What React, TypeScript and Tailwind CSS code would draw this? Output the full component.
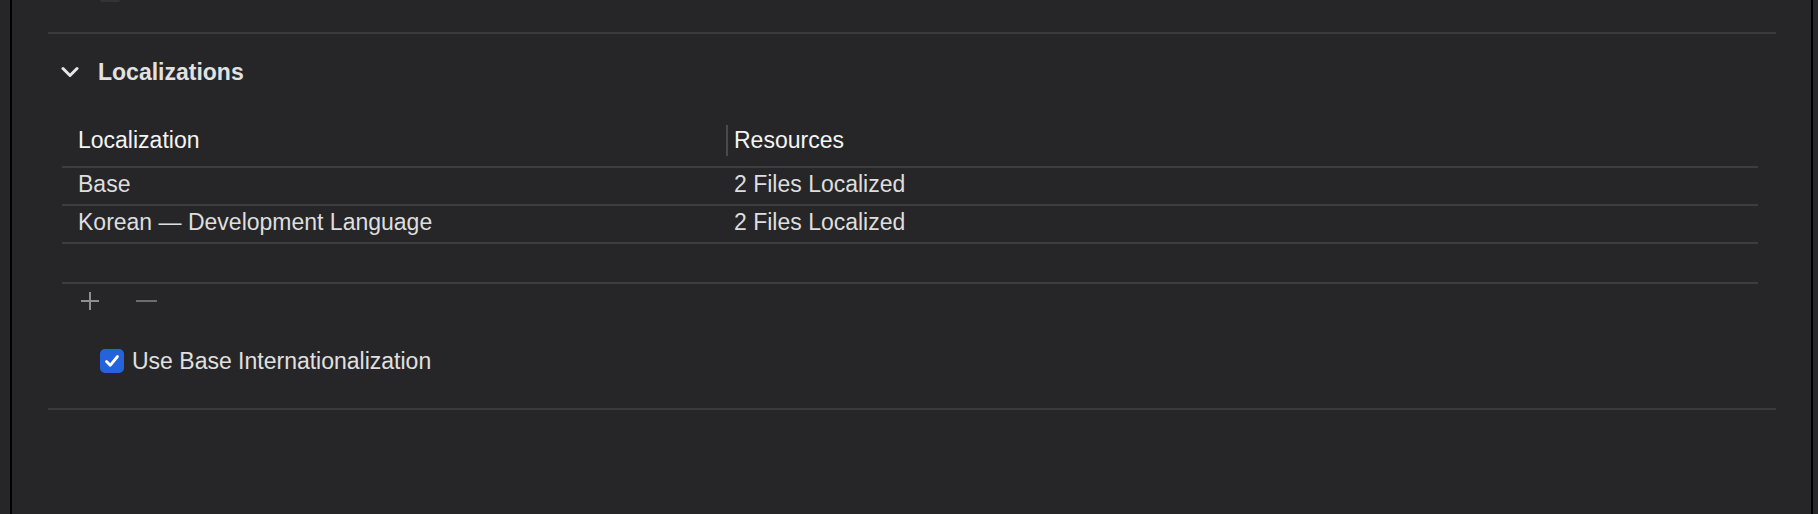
const rows = [
    { name: "Base", resources: "2 Files Localized" },
    { name: "Korean — Development Language", resources: "2 Files Localized" },
];

const App = () => {
    return (
        <div className="flex h-[514px] w-full bg-[#262628] font-['Liberation_Sans',Arial,sans-serif] text-[23px] overflow-hidden">
            <div className="w-[10px] shrink-0" />
            <div className="w-[2px] shrink-0 bg-black" />

            <div className="flex-1 flex flex-col pl-[36px] pr-[35px]">
                {/* bit of the control above, cut off */}
                <div className="ml-[52px] h-[2px] w-[20px] rounded-b-[3px] bg-[#333335]" />

                <div className="mt-[30px] h-[2px] bg-[#3a3a3c]" />

                {/* section header */}
                <div className="mt-[18px] flex h-[40px] items-center">
                    <svg width="18" height="12" viewBox="0 0 18 12" className="ml-[13px]">
                        <path d="M2 2.5 L9 9.5 L16 2.5" fill="none" stroke="#e6e6e6" strokeWidth="3" strokeLinecap="round" strokeLinejoin="round" />
                    </svg>
                    <span className="ml-[19px] font-bold text-[#e2e2e2]">Localizations</span>
                </div>

                {/* table */}
                <div className="ml-[14px] mr-[18px] mt-[24px] flex flex-col">
                    <div className="flex h-[52px] items-center pb-[2px] border-b-2 border-[#3d3d3f] text-[#f4f4f4]">
                        <div className="w-[664px] shrink-0 pl-[16px]">Localization</div>
                        <div className="h-[31px] w-[2px] shrink-0 bg-[#4a4a4c]" />
                        <div className="pl-[6px]">Resources</div>
                    </div>
                    {rows.map((r) => (
                        <div key={r.name} className="flex h-[38px] items-center pb-[4px] border-b-2 border-[#3d3d3f] text-[#dedede]">
                            <div className="w-[666px] shrink-0 pl-[16px]">{r.name}</div>
                            <div className="pl-[6px]">{r.resources}</div>
                        </div>
                    ))}
                    <div className="h-[40px] border-b-2 border-[#3d3d3f]" />

                    {/* add / remove */}
                    <div className="flex h-[34px] items-center">
                        <svg width="18" height="18" viewBox="0 0 18 18" className="ml-[19px]">
                            <path d="M9 0 V18 M0 9 H18" stroke="#8f8f91" strokeWidth="2" />
                        </svg>
                        <svg width="21" height="18" viewBox="0 0 21 18" className="ml-[37px]">
                            <path d="M0 9 H21" stroke="#6c6c6e" strokeWidth="2" />
                        </svg>
                    </div>
                </div>

                {/* checkbox */}
                <div className="ml-[52px] mt-[26px] flex items-center">
                    <div className="flex h-[24px] w-[24px] items-center justify-center rounded-[5px] bg-[#2463dc]">
                        <svg width="16" height="14" viewBox="0 0 16 14">
                            <path d="M2.5 7.5 L6.2 11.3 L13.5 2.5" fill="none" stroke="#ffffff" strokeWidth="2.8" strokeLinecap="round" strokeLinejoin="round" />
                        </svg>
                    </div>
                    <span className="ml-[8px] text-[#e0e0e0]">Use Base Internationalization</span>
                </div>

                <div className="mt-[29px] h-[2px] bg-[#3a3a3c]" />
            </div>

            <div className="w-[2px] shrink-0 bg-black" />
            <div className="w-[5px] shrink-0 bg-[#2a2a2c]" />
        </div>
    );
};

export default App;
